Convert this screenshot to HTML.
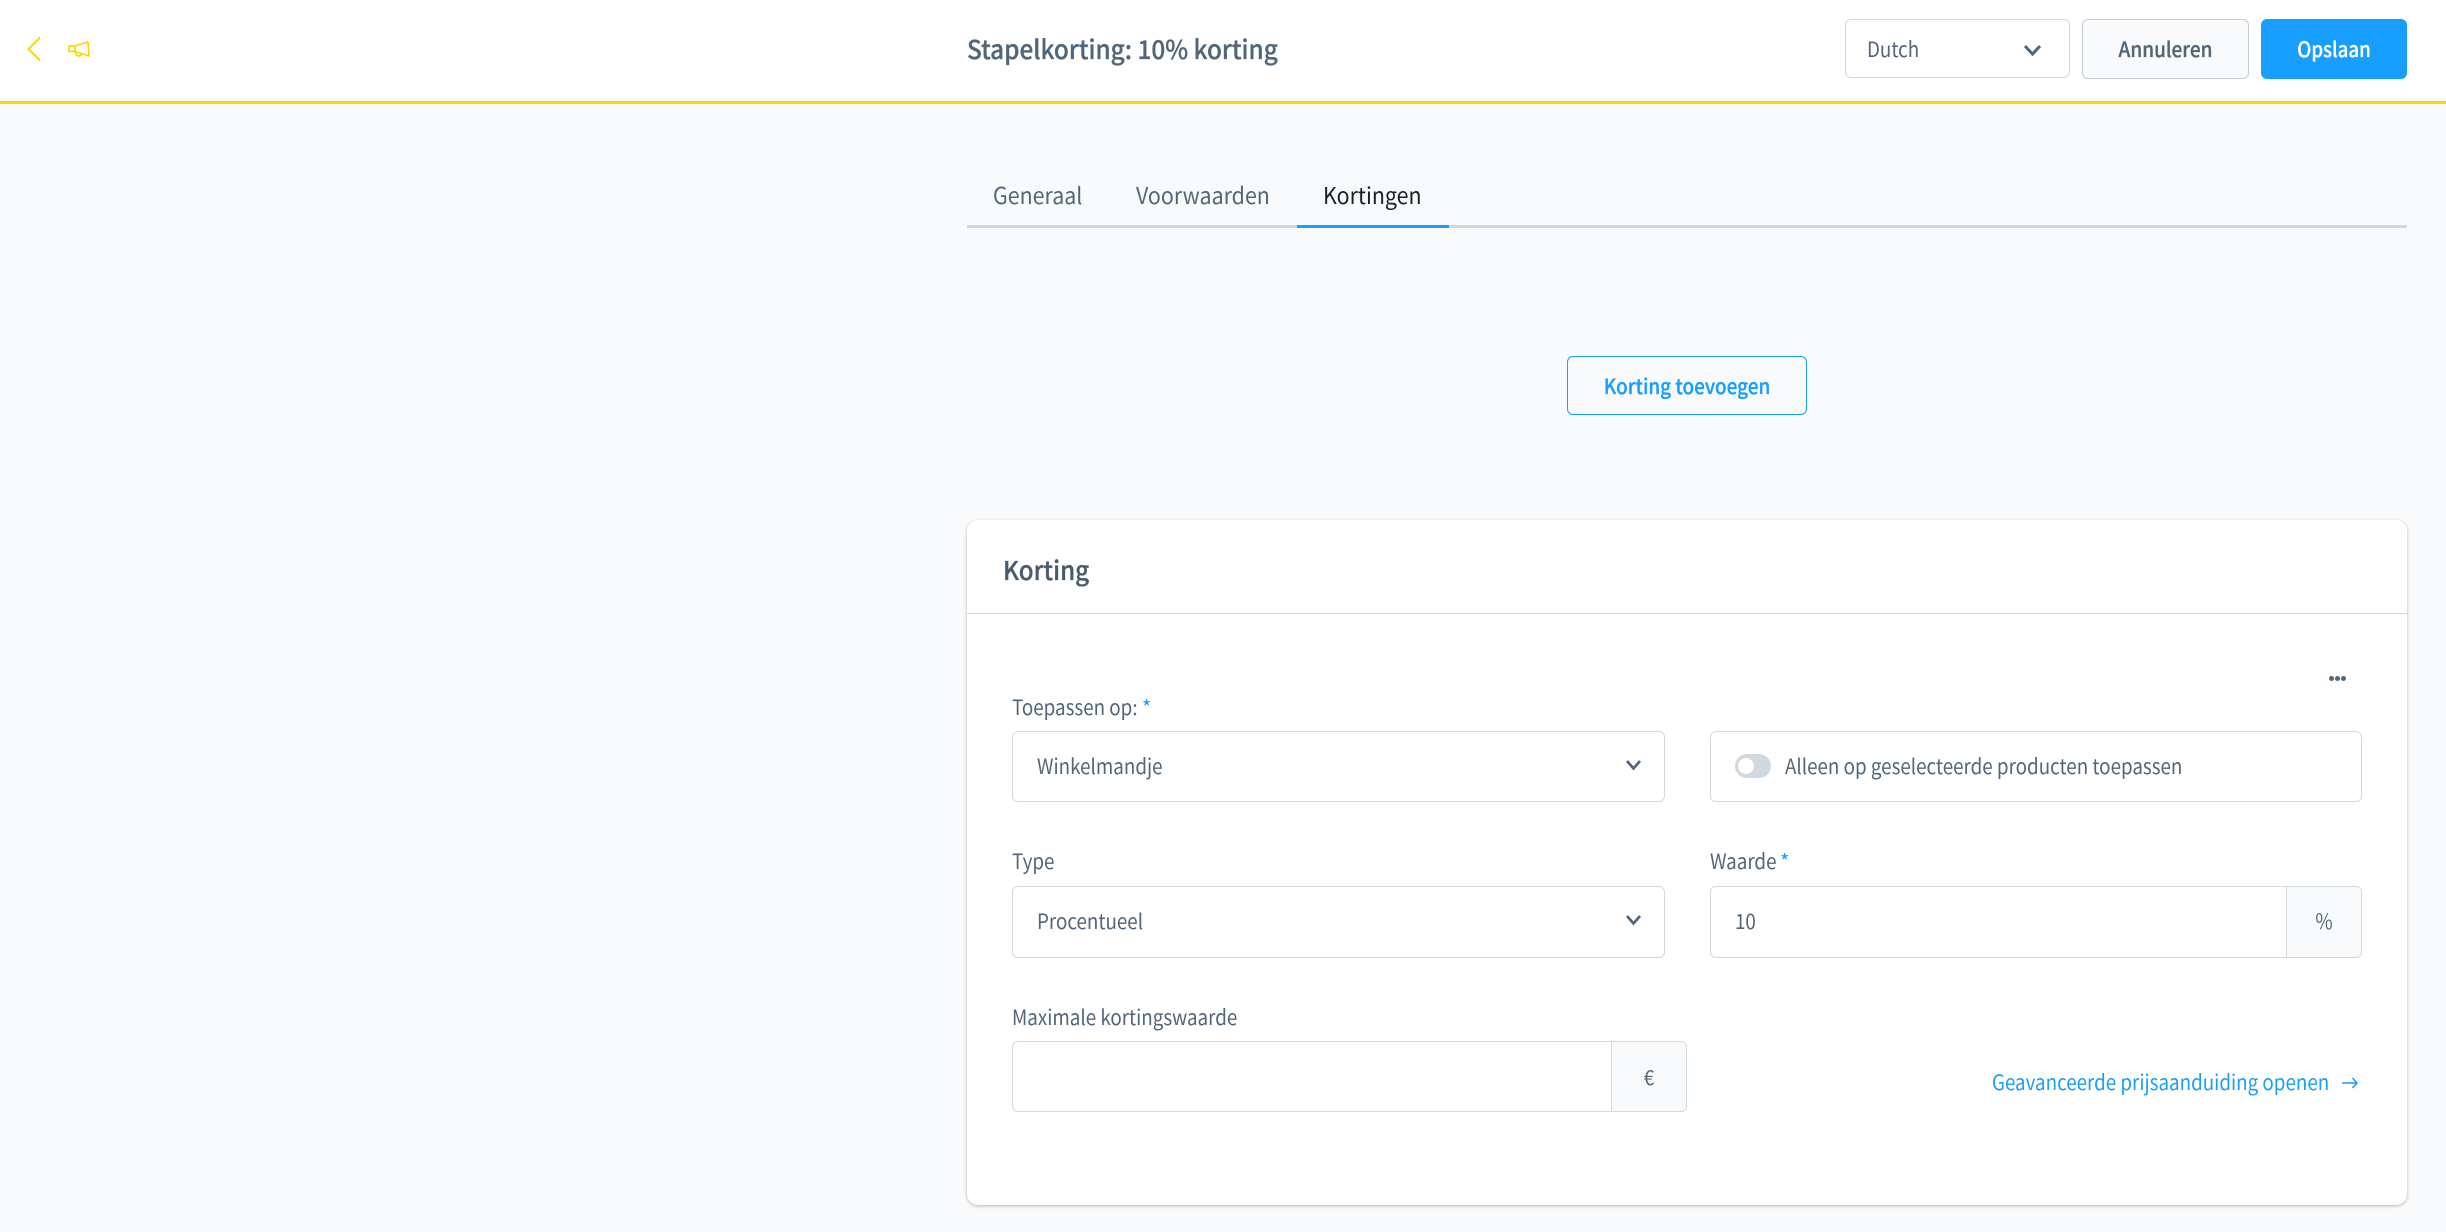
<!DOCTYPE html>
<html lang="nl">
<head>
<meta charset="utf-8">
<title>Stapelkorting: 10% korting</title>
<style>
html,body{margin:0;padding:0;}
body{width:2446px;height:1232px;overflow:hidden;position:relative;background:#f9fafb;font-family:"Noto Sans CJK SC","Liberation Sans",sans-serif;color:#52667a;}
.a{position:absolute;box-sizing:border-box;}
.t{position:absolute;white-space:nowrap;line-height:32px;height:32px;font-size:21px;transform:scaleX(.895);transform-origin:0 50%;}
.c{text-align:center;transform-origin:50% 50%;}
.box{position:absolute;box-sizing:border-box;background:#fff;border:1.5px solid #d1d9e0;border-radius:6px;}
.suf{position:absolute;box-sizing:border-box;background:#f9fafb;border-left:1.5px solid #d1d9e0;top:0;bottom:0;right:0;border-radius:0 5px 5px 0;}
.b{font-weight:500;-webkit-text-stroke:.3px currentColor;}
.tab{font-size:23px;transform:scaleX(.93);}
.h{font-size:26px;}
.star{position:absolute;color:#189eff;font-size:20px;line-height:32px;height:32px;white-space:nowrap;}
</style>
</head>
<body>
<div class="a" style="left:0;top:0;width:2446px;height:101px;background:#fff;"></div>
<div class="a" style="left:0;top:101px;width:2446px;height:3px;background:#ffd700;"></div>

<svg class="a" style="left:26px;top:35px;" width="18" height="28" viewBox="0 0 18 28"><path d="M14 2.500 2.500 14 14 25.500" fill="none" stroke="#ffd700" stroke-width="2"/></svg>
<svg class="a" style="left:66px;top:38px;" width="26" height="22" viewBox="0 0 26 22"><path d="M9 8 22 4 23 18 9 13.500ZM3 8H9V13.500H3ZM9.500 14 10 16.500 12.500 18 15 17.500 15.500 15.500" fill="none" stroke="#ffd700" stroke-width="1.700" stroke-linejoin="round"/></svg>

<div class="t b h" style="left:967px;top:33px;transform:scaleX(.936);">Stapelkorting: 10% korting</div>

<div class="box" style="left:1845px;top:19px;width:225px;height:59px;"></div>
<div class="t" style="left:1867px;top:33px;">Dutch</div>
<svg class="a" style="left:2023px;top:43px;" width="19" height="14" viewBox="0 0 19 14"><path d="M2 3 9.500 11 17 3" fill="none" stroke="#52667a" stroke-width="3"/></svg>

<div class="a" style="left:2082px;top:19px;width:167px;height:60px;background:#f9fafb;border:1.5px solid #c3ccd6;border-radius:6px;"></div>
<div class="t b c" style="left:2082px;top:33px;width:167px;transform:scaleX(.905);">Annuleren</div>
<div class="a" style="left:2261px;top:19px;width:146px;height:60px;background:#189eff;border-radius:6px;"></div>
<div class="t b c" style="left:2261px;top:33px;width:146px;color:#fff;transform:scaleX(.89);">Opslaan</div>

<div class="t tab" style="left:993px;top:178px;">Generaal</div>
<div class="t tab" style="left:1136px;top:178px;">Voorwaarden</div>
<div class="t tab" style="left:1323px;top:178px;color:#1a2025;">Kortingen</div>
<div class="a" style="left:967px;top:225px;width:1440px;height:3px;background:#d1d9e0;"></div>
<div class="a" style="left:1297px;top:225px;width:152px;height:3px;background:#189eff;"></div>

<div class="a" style="left:1567px;top:356px;width:240px;height:59px;border:1.5px solid #189eff;border-radius:6px;background:#f9fafb;"></div>
<div class="t b c" style="left:1567px;top:370px;width:240px;color:#189eff;transform:scaleX(.9);">Korting toevoegen</div>

<div class="a" style="left:967px;top:520px;width:1440px;height:685px;background:#fff;border-radius:11px;box-shadow:0 1px 3px rgba(0,0,0,.28);"></div>
<div class="a" style="left:967px;top:613px;width:1440px;height:1px;background:#d1d9e0;"></div>
<div class="t b h" style="left:1003px;top:554px;color:#4a5b6c;transform:scaleX(.93);">Korting</div>

<div class="a" style="left:2329px;top:676px;width:5px;height:5px;border-radius:50%;background:#52667a;"></div>
<div class="a" style="left:2335px;top:676px;width:5px;height:5px;border-radius:50%;background:#52667a;"></div>
<div class="a" style="left:2341px;top:676px;width:5px;height:5px;border-radius:50%;background:#52667a;"></div>

<div class="t" style="left:1012px;top:691px;">Toepassen op:</div>
<div class="star" style="left:1142px;top:691px;">*</div>
<div class="box" style="left:1012px;top:731px;width:653px;height:71px;"></div>
<div class="t" style="left:1037px;top:750px;">Winkelmandje</div>
<svg class="a" style="left:1624px;top:758px;" width="19" height="14" viewBox="0 0 19 14"><path d="M3 3 9.500 10.500 16 3" fill="none" stroke="#52667a" stroke-width="2.700"/></svg>

<div class="box" style="left:1710px;top:731px;width:652px;height:71px;"></div>
<div class="a" style="left:1735px;top:754px;width:36px;height:24px;background:#d1d9e0;border-radius:12px;"></div>
<div class="a" style="left:1738px;top:758px;width:16px;height:16px;background:#fff;border-radius:50%;"></div>
<div class="t" style="left:1785px;top:750px;">Alleen op geselecteerde producten toepassen</div>

<div class="t" style="left:1012px;top:845px;">Type</div>
<div class="box" style="left:1012px;top:886px;width:653px;height:72px;"></div>
<div class="t" style="left:1037px;top:905px;">Procentueel</div>
<svg class="a" style="left:1624px;top:913px;" width="19" height="14" viewBox="0 0 19 14"><path d="M3 3 9.500 10.500 16 3" fill="none" stroke="#52667a" stroke-width="2.700"/></svg>

<div class="t" style="left:1710px;top:845px;">Waarde</div>
<div class="star" style="left:1780px;top:845px;">*</div>
<div class="box" style="left:1710px;top:886px;width:652px;height:72px;"><div class="suf" style="width:75px;"></div></div>
<div class="t" style="left:1735px;top:905px;">10</div>
<div class="t c" style="left:2286px;top:905px;width:76px;">%</div>

<div class="t" style="left:1012px;top:1001px;">Maximale kortingswaarde</div>
<div class="box" style="left:1012px;top:1041px;width:675px;height:71px;"><div class="suf" style="width:75px;"></div></div>
<div class="t c" style="left:1611px;top:1061px;width:76px;">€</div>

<div class="t" style="left:1992px;top:1066px;color:#189eff;">Geavanceerde prijsaanduiding openen</div>
<svg class="a" style="left:2340px;top:1075px;" width="20" height="16" viewBox="0 0 20 16"><path d="M2 8H17M12.500 3 17 8 12.500 13" fill="none" stroke="#189eff" stroke-width="1.500"/></svg>
</body>
</html>
